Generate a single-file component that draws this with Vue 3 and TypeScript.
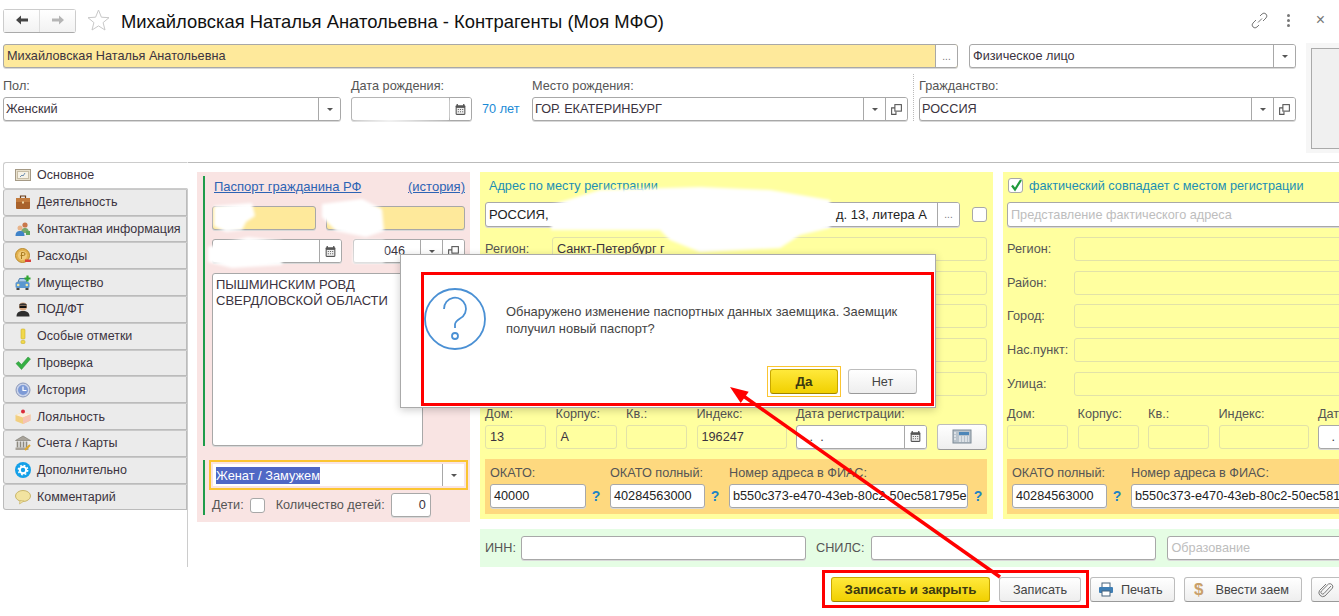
<script setup lang="ts">
interface Tab {
  label: string
  icon: string
}

const tabs: Tab[] = [
  { label: 'Основное', icon: 'card' },
  { label: 'Деятельность', icon: 'case' },
  { label: 'Контактная информация', icon: 'people' },
  { label: 'Расходы', icon: 'coin' },
  { label: 'Имущество', icon: 'car' },
  { label: 'ПОД/ФТ', icon: 'agent' },
  { label: 'Особые отметки', icon: 'excl' },
  { label: 'Проверка', icon: 'check' },
  { label: 'История', icon: 'clock' },
  { label: 'Лояльность', icon: 'cake' },
  { label: 'Счета / Карты', icon: 'bank' },
  { label: 'Дополнительно', icon: 'gear' },
  { label: 'Комментарий', icon: 'bubble' }
]

const regRows = [
  { label: 'Регион:', value: 'Санкт-Петербург г' },
  { label: 'Район:', value: '' },
  { label: 'Город:', value: '' },
  { label: 'Нас.пункт:', value: '' },
  { label: 'Улица:', value: '' }
]

const factRows = regRows.map((r) => ({ label: r.label, value: '' }))
const houseLabels = ['Дом:', 'Корпус:', 'Кв.:', 'Индекс:']
const regHouse = ['13', 'А', '', '196247']
const fiasId = 'b550c373-e470-43eb-80c2-50ec581795e'
</script>

<template>
  <div class="page">
    <svg class="defs" aria-hidden="true">
      <symbol id="i-cal" viewBox="0 0 12 12">
        <rect x="1.5" y="2" width="9" height="9" rx="1" fill="#555" />
        <rect x="2.5" y="4.5" width="7" height="5.5" fill="#eee" />
        <path d="M3 1v2M9 1v2" stroke="#555" stroke-width="1.2" />
        <path d="M3.5 6h5M3.5 8h5" stroke="#666" stroke-dasharray="1 1" />
      </symbol>
      <symbol id="i-open" viewBox="0 0 12 12">
        <rect x="4.5" y="1.5" width="6" height="6" fill="none" stroke="#555" />
        <path d="M4.5 4.5H1.5v6h4V8" fill="none" stroke="#555" />
      </symbol>
      <symbol id="t-card" viewBox="0 0 16 16">
        <rect x="0.5" y="2.5" width="15" height="11" fill="#e8e0cc" stroke="#a59a86" />
        <rect x="2.5" y="4.5" width="11" height="7" fill="#f6f2e6" stroke="#c7bda6" />
        <path d="M5 10l2-2 1 1 2-3" fill="none" stroke="#6f8fb0" />
      </symbol>
      <symbol id="t-case" viewBox="0 0 16 16">
        <path d="M5.5 4V2h5v2" fill="none" stroke="#6b3d18" stroke-width="1.2" />
        <rect x="1" y="4" width="14" height="11" rx="1" fill="#a9622b" />
        <rect x="1" y="4" width="14" height="4" fill="#c27b3d" />
        <rect x="7" y="7.5" width="2" height="2" fill="#f0d9a8" />
      </symbol>
      <symbol id="t-people" viewBox="0 0 16 16">
        <circle cx="10" cy="4" r="2.6" fill="#c9774a" />
        <path d="M6 12c0-4 2-5 4-5s4 1 4 5z" fill="#7aa86b" />
        <circle cx="5" cy="7" r="2.5" fill="#e8b48a" />
        <path d="M0.5 15c0-4 2-5 4.5-5s4.500 1 4.500 5z" fill="#3f83c9" />
        <rect x="11" y="10" width="4" height="4" fill="#5ba55b" />
      </symbol>
      <symbol id="t-coin" viewBox="0 0 16 16">
        <circle cx="7.500" cy="7.500" r="7" fill="#e3b24f" stroke="#b98a2d" />
        <circle cx="7.500" cy="7.500" r="4.500" fill="#f0cc7c" />
        <path d="M6.500 11V4.500h2a1.500 1.500 0 0 1 0 3h-3" fill="none" stroke="#a87a20" />
        <rect x="10" y="11.500" width="6" height="2.500" fill="#d8413a" />
      </symbol>
      <symbol id="t-car" viewBox="0 0 16 16">
        <path d="M3 7l1.500-3.500h6L12 7z" fill="#a9cbe8" stroke="#4a7aa8" />
        <rect x="0.500" y="7" width="14" height="6" rx="1.500" fill="#5a97d0" />
        <circle cx="3.200" cy="10" r="1.300" fill="#f6e7a0" />
        <circle cx="11.800" cy="10" r="1.300" fill="#f6e7a0" />
        <rect x="1.500" y="13" width="3" height="2" fill="#444" />
        <rect x="10.500" y="13" width="3" height="2" fill="#444" />
        <path d="M12.500 0.500v6M9.500 3.500h6" stroke="#2fa52f" stroke-width="2.200" />
      </symbol>
      <symbol id="t-agent" viewBox="0 0 16 16">
        <path d="M1.500 15.500c0-4 2.500-5.500 6.500-5.500s6.500 1.500 6.500 5.500z" fill="#2e2e2e" />
        <circle cx="8" cy="5.500" r="4" fill="#d9a77e" />
        <path d="M4 4.500c0-3 8-3 8 0z" fill="#333" />
        <rect x="4.500" y="5" width="7" height="2" fill="#111" />
      </symbol>
      <symbol id="t-excl" viewBox="0 0 16 16">
        <rect x="6" y="1" width="4" height="10" rx="1" fill="#f1d84b" stroke="#cdb32a" stroke-width="0.600" />
        <rect x="6" y="12.500" width="4" height="3" rx="1" fill="#f1d84b" stroke="#cdb32a" stroke-width="0.600" />
      </symbol>
      <symbol id="t-check" viewBox="0 0 16 16">
        <path d="M1 8.500l2.500-2 3 3L13 2l2.500 2-9 10.500z" fill="#35b044" stroke="#2a8c35" stroke-width="0.500" />
      </symbol>
      <symbol id="t-clock" viewBox="0 0 16 16">
        <circle cx="8" cy="8" r="7" fill="#c9d3ea" stroke="#8a97b8" />
        <circle cx="8" cy="8" r="5" fill="#7d9ad6" />
        <path d="M8 4.500V8.500H11.500" fill="none" stroke="#fff" stroke-width="1.200" />
      </symbol>
      <symbol id="t-cake" viewBox="0 0 16 16">
        <path d="M0.500 6L8 3l7.500 2.500v6L8 15l-7.500-3z" fill="#f2cf7f" />
        <path d="M0.500 6L8 8.500l7.500-3L8 3z" fill="#fbeedd" />
        <path d="M8 8.500V15l7.500-3.500v-6z" fill="#f6c3b4" />
        <circle cx="8" cy="2.500" r="2" fill="#d92b3a" />
      </symbol>
      <symbol id="t-bank" viewBox="0 0 16 16">
        <path d="M0.500 5.500L8 1l7.500 4.500z" fill="#a8a39a" stroke="#77736b" stroke-width="0.600" />
        <path d="M2.500 6.500v6M5.500 6.500v6M8.500 6.500v6M11.500 6.500v6" stroke="#8d897f" stroke-width="1.600" />
        <rect x="0.500" y="12.500" width="13" height="2.500" fill="#a8a39a" />
        <path d="M10 15l5-5" stroke="#e0a92f" stroke-width="2" />
      </symbol>
      <symbol id="t-gear" viewBox="0 0 16 16">
        <circle cx="8" cy="8" r="8" fill="#14a0e8" />
        <circle cx="8" cy="8" r="3.200" fill="none" stroke="#fff" stroke-width="2" />
        <circle cx="8" cy="8" r="4.700" fill="none" stroke="#fff" stroke-width="1.400" stroke-dasharray="1.800 1.900" />
      </symbol>
      <symbol id="t-bubble" viewBox="0 0 16 16">
        <ellipse cx="8" cy="7" rx="7.500" ry="5.500" fill="#f2e3a0" stroke="#c9b66c" />
        <path d="M5 11.500L4.500 15 9 12z" fill="#f2e3a0" stroke="#c9b66c" stroke-width="0.700" />
      </symbol>
    </svg>

    <header class="head">
      <div class="nav">
        <button class="nav-btn">
          <svg width="14" height="12" viewBox="0 0 14 12"><path d="M1 6l5-4.500V4.500h7v3H6v3z" fill="#444" /></svg>
        </button>
        <button class="nav-btn">
          <svg width="14" height="12" viewBox="0 0 14 12"><path d="M13 6L8 1.500V4.500H1v3h7v3z" fill="#b5b5b5" /></svg>
        </button>
      </div>
      <svg class="star" width="23" height="22" viewBox="0 0 23 22">
        <path d="M11.500 1l2.900 7.200 7.600.500-5.900 4.900 1.900 7.400-6.500-4.100-6.500 4.100 1.900-7.400L1 8.700l7.600-.500z" fill="none" stroke="#c8c8c8" />
      </svg>
      <h1 class="title">Михайловская Наталья Анатольевна - Контрагенты (Моя МФО)</h1>
      <div class="head-tools">
        <svg width="17" height="17" viewBox="0 0 17 17">
          <path d="M7 10.500l4-4M9 4l2-2a2.800 2.800 0 0 1 4 4l-3 3M8 13l-2 2a2.800 2.800 0 0 1-4-4l3-3" fill="none" stroke="#777" />
        </svg>
        <span class="dots"><i></i><i></i><i></i></span>
        <span class="close">×</span>
      </div>
    </header>

    <section class="top">
      <div class="top-fields">
        <div class="name-row">
          <div class="field name-field">
            <span class="val">Михайловская Наталья Анатольевна</span>
            <span class="cell dim">...</span>
          </div>
          <div class="field type-field">
            <span class="val">Физическое лицо</span>
            <span class="cell"><i class="caret"></i></span>
          </div>
        </div>
        <div class="person-row">
          <label class="col col-sex">
            <span class="lbl">Пол:</span>
            <div class="field">
              <span class="val">Женский</span>
              <span class="cell"><i class="caret"></i></span>
            </div>
          </label>
          <label class="col col-birth">
            <span class="lbl">Дата рождения:</span>
            <div class="field">
              <span class="val"></span>
              <span class="cell"><svg class="ic"><use href="#i-cal" /></svg></span>
            </div>
          </label>
          <span class="age">70 лет</span>
          <label class="col col-place">
            <span class="lbl">Место рождения:</span>
            <div class="field">
              <span class="val">ГОР. ЕКАТЕРИНБУРГ</span>
              <span class="cell"><i class="caret"></i></span>
              <span class="cell"><svg class="ic"><use href="#i-open" /></svg></span>
            </div>
          </label>
          <label class="col col-citizen">
            <span class="lbl">Гражданство:</span>
            <div class="field">
              <span class="val">РОССИЯ</span>
              <span class="cell"><i class="caret"></i></span>
              <span class="cell"><svg class="ic"><use href="#i-open" /></svg></span>
            </div>
          </label>
        </div>
      </div>
      <div class="photo"><div class="photo-in"></div></div>
    </section>

    <section class="body">
      <nav class="tabs">
        <div v-for="(tab, i) in tabs" :key="tab.label" class="tab" :class="{ active: i === 0 }">
          <svg class="tab-ic"><use :href="'#t-' + tab.icon" /></svg>
          <span>{{ tab.label }}</span>
        </div>
      </nav>

      <div class="content">
        <div class="passport">
          <div class="pass-main">
            <div class="pass-head">
              <a class="link">Паспорт гражданина РФ</a>
              <a class="link hist">(история)</a>
            </div>
            <div class="pass-nums">
              <div class="field req w104"></div>
              <div class="field req grow"></div>
            </div>
            <div class="pass-dates">
              <div class="field w130">
                <span class="val"></span>
                <span class="cell"><svg class="ic"><use href="#i-cal" /></svg></span>
              </div>
              <div class="field w112">
                <span class="val code">046</span>
                <span class="cell"><i class="caret"></i></span>
                <span class="cell"><svg class="ic"><use href="#i-open" /></svg></span>
              </div>
            </div>
            <div class="field issued">ПЫШМИНСКИМ РОВД<br />СВЕРДЛОВСКОЙ ОБЛАСТИ</div>
          </div>
          <div class="pass-extra">
            <div class="marital">
              <span class="val"><mark>Женат / Замужем</mark></span>
              <span class="cell"><i class="caret"></i></span>
            </div>
            <div class="kids">
              <span class="lbl-in">Дети:</span>
              <span class="box"></span>
              <span class="lbl-in kids-count">Количество детей:</span>
              <div class="field kids-num">0</div>
            </div>
          </div>
        </div>

        <div class="right">
          <div class="addresses">
            <div class="addr addr-reg">
              <div class="addr-title">Адрес по месту регистрации</div>
              <div class="addr-line">
                <div class="field addr-input">
                  <span class="val addr-val"><span>РОССИЯ,</span><span>д. 13, литера А</span></span>
                  <span class="cell dim">...</span>
                </div>
                <span class="box"></span>
              </div>
              <div class="addr-rows">
                <div v-for="row in regRows" :key="row.label" class="addr-row">
                  <span class="lbl-in">{{ row.label }}</span>
                  <div class="flat">{{ row.value }}</div>
                </div>
              </div>
              <div class="house">
                <div v-for="(h, i) in houseLabels" :key="h" class="house-col">
                  <span class="lbl-in">{{ h }}</span>
                  <div class="flat">{{ regHouse[i] }}</div>
                </div>
                <div class="house-col">
                  <span class="lbl-in">Дата регистрации:</span>
                  <div class="field">
                    <span class="val">&nbsp; &nbsp;.&nbsp; .</span>
                    <span class="cell"><svg class="ic"><use href="#i-cal" /></svg></span>
                  </div>
                </div>
                <button class="btn phone-btn">
                  <svg width="20" height="15" viewBox="0 0 20 15">
                    <rect x="1" y="1" width="18" height="13" fill="#b9c3cc" stroke="#7d8a96" />
                    <rect x="7" y="3" width="10" height="3" fill="#4d86b8" />
                    <path d="M7 8h10M7 10h10M7 12h10M3 3v9" stroke="#fff" stroke-dasharray="2 1" />
                  </svg>
                </button>
              </div>
              <div class="okato">
                <div class="ok-col ok-a">
                  <span class="lbl-in">ОКАТО:</span>
                  <div class="field">40000</div>
                </div>
                <span class="q">?</span>
                <div class="ok-col ok-b">
                  <span class="lbl-in">ОКАТО полный:</span>
                  <div class="field">40284563000</div>
                </div>
                <span class="q">?</span>
                <div class="ok-col ok-c">
                  <span class="lbl-in">Номер адреса в ФИАС:</span>
                  <div class="field">{{ fiasId }}</div>
                </div>
                <span class="q">?</span>
              </div>
            </div>

            <div class="addr addr-fact">
              <div class="addr-title">
                <span class="box checked">
                  <svg width="14" height="14" viewBox="0 0 14 14"><path d="M3 6.500l3 4L12 1" fill="none" stroke="#1f9a3c" stroke-width="2.200" /></svg>
                </span>
                фактический совпадает с местом регистрации
              </div>
              <div class="addr-line">
                <div class="field addr-input wide">
                  <span class="val ph">Представление фактического адреса</span>
                </div>
              </div>
              <div class="addr-rows">
                <div v-for="row in factRows" :key="row.label" class="addr-row">
                  <span class="lbl-in">{{ row.label }}</span>
                  <div class="flat"></div>
                </div>
              </div>
              <div class="house">
                <div v-for="h in houseLabels" :key="h" class="house-col">
                  <span class="lbl-in">{{ h }}</span>
                  <div class="flat"></div>
                </div>
                <div class="house-col">
                  <span class="lbl-in">Дата регистрации:</span>
                  <div class="field">
                    <span class="val">&nbsp; &nbsp;.&nbsp; .</span>
                  </div>
                </div>
              </div>
              <div class="okato">
                <div class="ok-col ok-b">
                  <span class="lbl-in">ОКАТО полный:</span>
                  <div class="field">40284563000</div>
                </div>
                <span class="q">?</span>
                <div class="ok-col ok-c">
                  <span class="lbl-in">Номер адреса в ФИАС:</span>
                  <div class="field">{{ fiasId }}</div>
                </div>
              </div>
            </div>
          </div>

          <div class="ids">
            <span class="lbl-in">ИНН:</span>
            <div class="field id-field"></div>
            <span class="lbl-in snils">СНИЛС:</span>
            <div class="field id-field"></div>
            <div class="field edu"><span class="val ph">Образование</span></div>
          </div>
        </div>
      </div>
    </section>

    <footer class="actions">
      <button class="btn primary save-close">Записать и закрыть</button>
      <button class="btn save">Записать</button>
      <button class="btn print">
        <svg width="16" height="15" viewBox="0 0 16 15">
          <rect x="4" y="1" width="8" height="5" fill="#fff" stroke="#47637d" />
          <rect x="1" y="5" width="14" height="6" rx="1" fill="#3f7fb5" />
          <rect x="4" y="9" width="8" height="5" fill="#fff" stroke="#47637d" />
        </svg>
        Печать
      </button>
      <button class="btn loan"><span class="dollar">$</span>Ввести заем</button>
      <button class="btn clip">
        <svg width="16" height="16" viewBox="0 0 16 16">
          <path d="M13 4L6 11.500a1.800 1.800 0 0 1-2.600-2.500L10.500 2a3 3 0 0 1 4 4L7 14a4 4 0 0 1-5.500-5.500L8 2" fill="none" stroke="#777" />
        </svg>
      </button>
    </footer>

    <!-- стёртые от руки персональные данные -->
    <svg class="scribbles" width="1339" height="616" aria-hidden="true">
      <path d="M353 99h96v20l-60 3-36-2z" />
      <path d="M214 206l38-3 3 13-9 6-4 8-16 2-12-6z" />
      <path d="M322 204l40-5 20 10 2 22-18 6-30-6-14-14z" />
      <path d="M208 247l40-10 34 4v24l-50 3-24-6z" />
      <path d="M354 240h30v23h-31z" />
      <path d="M551 205l49-15 100-3 70 3 60 10v28l-30 7-20 13-80 4-30-12-10-10H551z" />
    </svg>

    <div class="dialog">
      <svg class="q-icon" width="64" height="64" viewBox="0 0 64 64">
        <circle cx="32" cy="32" r="30" fill="none" stroke="#4a90d4" stroke-width="1.800" />
        <path d="M21 22a11 11 0 1 1 16 9.500c-3 2-5 3.500-5 6V41" fill="none" stroke="#4a90d4" stroke-width="1.800" />
        <circle cx="32" cy="49" r="3" fill="none" stroke="#4a90d4" stroke-width="1.800" />
      </svg>
      <p class="dlg-text">Обнаружено изменение паспортных данных заемщика. Заемщик<br />получил новый паспорт?</p>
      <div class="dlg-btns">
        <span class="focus-ring"><button class="btn primary yes">Да</button></span>
        <button class="btn no">Нет</button>
      </div>
    </div>

    <!-- пометки поверх скриншота -->
    <div class="mark-rect dlg-mark"></div>
    <div class="mark-rect btn-mark"></div>
    <svg class="arrow" width="1339" height="616" aria-hidden="true">
      <path d="M1000 577L742 395" stroke="#f00" stroke-width="3.500" fill="none" />
      <path d="M730 387l10.700 16 8-11.300z" fill="#f00" />
    </svg>
  </div>
</template>

<style scoped>
.page {
  position: relative;
  width: 1339px;
  height: 616px;
  overflow: hidden;
  background: #fff;
  font-family: 'Liberation Sans', Arial, sans-serif;
  font-size: 12.7px;
  color: #3b3340;
}

.defs {
  position: absolute;
  width: 0;
  height: 0;
}

/* шапка */
.head {
  display: flex;
  align-items: center;
  height: 43px;
  padding: 0 0 0 3px;
}

.nav {
  display: flex;
  width: 73px;
  height: 24px;
  margin-top: -1px;
  border: 1px solid #ccc;
  border-bottom-color: #aaa;
  border-radius: 3px;
  box-sizing: border-box;
}

.nav-btn {
  flex: 1;
  padding: 0;
  border: none;
  background: linear-gradient(#fff, #f2f2f2);
}

.nav-btn + .nav-btn {
  border-left: 1px solid #ddd;
}

.star {
  margin: -3px 0 0 11px;
}

.title {
  margin: 0 0 0 11px;
  font-size: 18.4px;
  font-weight: 400;
  color: #111;
  white-space: nowrap;
}

.head-tools {
  display: flex;
  align-items: center;
  margin-left: auto;
  padding-right: 14px;
  margin-top: -3px;
}

.dots {
  display: flex;
  flex-direction: column;
  gap: 2px;
  margin: 0 26px 0 19px;
}

.dots i {
  width: 3px;
  height: 3px;
  border-radius: 50%;
  background: #777;
}

.close {
  font-size: 16px;
  color: #777;
}

/* верхние поля */
.top {
  display: flex;
  height: 119px;
}

.top-fields {
  width: 1296px;
  padding: 1px 0 0 3px;
  box-sizing: border-box;
}

.name-row {
  display: flex;
  gap: 11px;
}

.field.name-field {
  width: 955px;
  padding-left: 3px;
  background: #fee99b;
}

.name-field .cell {
  background: #fff;
}

.field.type-field {
  flex: 1;
  padding-left: 3px;
}

.person-row {
  display: flex;
  align-items: flex-end;
  margin-top: 11px;
}

.col {
  display: flex;
  flex-direction: column;
}

.lbl {
  height: 18px;
  line-height: 15px;
  color: #555;
}

.col-sex {
  width: 338px;
}

.col-birth {
  width: 121px;
  margin-left: 10px;
}

.age {
  width: 50px;
  margin-left: 10px;
  line-height: 24px;
  color: #1b8ad6;
  white-space: nowrap;
}

.col-place {
  width: 376px;
}

.col-citizen {
  flex: 1;
  margin-left: 11px;
  position: relative;
}

.col-citizen::before {
  content: '';
  position: absolute;
  left: -6px;
  top: -5px;
  bottom: 0;
  border-left: 1px dotted #bbb;
}

.photo {
  flex: 1;
  height: 110px;
  margin-left: 10px;
  padding: 5px 0 0 5px;
  box-sizing: border-box;
  background: #f6f6f6;
}

.photo-in {
  height: 99px;
  border: 1px solid #aaa;
  border-right: none;
  background: #f0f0f0;
}

/* общие поля */
.field {
  display: flex;
  align-items: center;
  height: 24px;
  padding-left: 2px;
  border: 1px solid #a8a8a8;
  border-radius: 3px;
  box-shadow: 0 1px 0 #d8d8d8;
  box-sizing: border-box;
  background: #fff;
  white-space: nowrap;
  overflow: hidden;
}

.val {
  flex: 1;
  min-width: 0;
}

.cell {
  display: flex;
  align-items: center;
  justify-content: center;
  flex: none;
  width: 21px;
  height: 100%;
  border-left: 1px solid #a8a8a8;
  background: #fff;
}

.dim {
  color: #777;
  font-size: 10px;
}

.caret {
  width: 0;
  height: 0;
  border: 3px solid transparent;
  border-top: 3.500px solid #555;
  border-bottom: none;
}

.ic {
  width: 13px;
  height: 13px;
}

.box {
  display: inline-block;
  flex: none;
  width: 15px;
  height: 15px;
  border: 1px solid #a8a8a8;
  border-radius: 3px;
  box-sizing: border-box;
  background: #fff;
}

.lbl-in {
  color: #555;
  white-space: nowrap;
}

.ph {
  color: #bdbdbd;
}

.q {
  flex: none;
  width: 10px;
  margin-top: 18px;
  line-height: 24px;
  font-size: 14px;
  font-weight: 700;
  text-align: center;
  color: #2184c4;
}

/* закладки */
.body {
  display: flex;
}

.tabs {
  flex: none;
  width: 184px;
  margin-left: 3px;
  font-size: 12.5px;
}

.tab {
  display: flex;
  align-items: center;
  gap: 6px;
  height: 26.800px;
  padding-left: 11px;
  border: 1px solid #bbb;
  border-top-color: #c8c8c8;
  border-radius: 3px 0 0 3px;
  box-sizing: border-box;
  background: #ebebeb;
  white-space: nowrap;
}

.tab.active {
  position: relative;
  margin-right: -1px;
  border-color: #ccc;
  border-right-color: #fff;
  background: #fff;
}

.tab-ic {
  width: 16px;
  height: 16px;
  flex: none;
}

.content {
  display: flex;
  flex: 1;
  gap: 10px;
  height: 405px;
  padding: 9px 0 0 9px;
  border-top: 1px solid #bbb;
  border-left: 1px solid #ccc;
  box-sizing: border-box;
  min-width: 0;
}

/* паспорт */
.passport {
  flex: none;
  width: 273px;
  height: 350px;
  padding: 4px 5px 0 6px;
  box-sizing: border-box;
  background: #f9e4e3;
}

.pass-main,
.pass-extra {
  border-left: 2px solid #1f9c4a;
  padding-left: 7px;
}

.pass-main {
  height: 270px;
}

.pass-head {
  display: flex;
  justify-content: space-between;
  height: 30px;
  padding: 3px 0 0 2px;
  box-sizing: border-box;
  font-size: 13px;
}

.link {
  color: #2d63b4;
  text-decoration: underline;
}

.pass-nums,
.pass-dates {
  display: flex;
  gap: 10px;
}

.pass-dates {
  margin-top: 9px;
  gap: 11px;
}

.field.req {
  background: #fee99b;
}

.w104 {
  width: 104px;
}

.grow {
  width: 139px;
}

.w130 {
  width: 130px;
}

.w112 {
  width: 112px;
}

.code {
  padding-left: 28px;
}

.field.issued {
  display: block;
  width: 211px;
  height: 173px;
  margin-top: 10px;
  padding: 3px 3px;
  line-height: 16px;
  font-size: 13px;
}

.pass-extra {
  margin-top: 17px;
  height: 55px;
  padding-left: 4px;
}

.marital {
  display: flex;
  align-items: center;
  width: 259px;
  height: 30px;
  margin-top: -3px;
  padding: 2px;
  border: 2px solid #fbc531;
  box-sizing: border-box;
  background: #fff content-box;
  font-size: 12.8px;
}

.marital .val {
  padding-left: 3px;
}

.marital .cell {
  height: 22px;
}

.marital mark {
  padding: 1px 0;
  background: #5068c5;
  color: #fff;
}

.kids {
  display: flex;
  align-items: center;
  height: 24px;
  margin-top: 3px;
  padding-left: 3px;
}

.kids .box {
  margin-left: 6px;
}

.kids-count {
  margin-left: 11px;
}

.field.kids-num {
  justify-content: flex-end;
  width: 40px;
  margin-left: 6px;
  padding-right: 4px;
}

/* адреса */
.right {
  flex: 1;
  min-width: 0;
}

.addresses {
  display: flex;
  gap: 10px;
}

.addr {
  flex: none;
  width: 513px;
  height: 347px;
  padding: 0 6px 0 5px;
  box-sizing: border-box;
  background: #ffff9f;
}

.addr-fact {
  padding-left: 4px;
}

.addr-title {
  display: flex;
  align-items: center;
  gap: 6px;
  height: 30px;
  padding: 0 0 3px 4px;
  box-sizing: border-box;
  color: #1b8fb5;
}

.addr-fact .addr-title {
  padding-left: 1px;
}

.addr-line {
  display: flex;
  align-items: center;
  gap: 12px;
  height: 25px;
}

.field.addr-input {
  width: 475px;
  height: 25px;
  padding-left: 3px;
}

.field.addr-input.wide {
  width: 520px;
  flex: none;
}

.addr-val {
  display: flex;
  justify-content: space-between;
  padding-right: 10px;
  color: #222;
  font-size: 13px;
}

.addr-rows {
  display: flex;
  flex-direction: column;
  gap: 9.700px;
  margin-top: 10px;
}

.addr-row {
  display: flex;
  align-items: center;
}

.addr-row .lbl-in {
  flex: none;
  width: 67px;
}

.flat {
  flex: 1;
  height: 24px;
  padding-left: 4px;
  line-height: 22px;
  border: 1px solid #e2e2a8;
  border-radius: 3px;
  box-sizing: border-box;
  background: #ffff9f;
}

.house {
  display: grid;
  grid-template-columns: 61px 61px 61px 90px 131px 50px;
  column-gap: 9.500px;
  align-items: end;
  margin-top: 11px;
}

.house-col {
  display: flex;
  flex-direction: column;
  gap: 4px;
}

.house-col .lbl-in {
  line-height: 14px;
}

.flat,
.house-col .field {
  flex: none;
}

.addr-row .flat {
  flex: 1;
}

.okato {
  display: flex;
  width: 502px;
  height: 55px;
  margin-top: 10px;
  padding: 7px 5px 0 5px;
  box-sizing: border-box;
  background: #fed97f;
}

.ok-col {
  display: flex;
  flex-direction: column;
  gap: 4px;
  flex: none;
}

.ok-col .lbl-in {
  line-height: 14px;
}

.ok-col .field {
  padding-left: 3px;
  color: #222;
}

.ok-a {
  width: 96px;
  margin-right: 5px;
}

.ok-b {
  width: 95px;
  margin-right: 5px;
}

.ok-a + .q {
  margin-right: 9px;
}

.ok-b + .q {
  margin-right: 9px;
}

.ok-c {
  width: 239px;
  margin-right: 5px;
}

/* ИНН и СНИЛС */
.ids {
  display: flex;
  align-items: center;
  width: 880px;
  height: 38px;
  margin-top: 10px;
  padding-left: 5px;
  box-sizing: border-box;
  background: #e5fde4;
}

.field.id-field {
  flex: none;
  width: 285px;
  margin-left: 5px;
}

.snils {
  margin-left: 10px;
}

.snils + .field.id-field {
  margin-left: 7px;
}

.field.edu {
  flex: none;
  width: 200px;
  margin-left: 11px;
  padding-left: 3px;
}

/* кнопки */
.btn {
  display: inline-flex;
  align-items: center;
  justify-content: center;
  height: 25px;
  padding: 0;
  border: 1px solid #bdbdbd;
  border-bottom-color: #999;
  border-radius: 3px;
  box-sizing: border-box;
  background: linear-gradient(#fff, #eee);
  font: inherit;
  color: #444;
  white-space: nowrap;
}

.primary {
  border-color: #c9a800;
  border-bottom-color: #9d8300;
  background: linear-gradient(#ffe93b, #f1d000);
  color: #3d3a10;
  font-size: 13.3px;
  font-weight: 700;
}

.phone-btn {
  height: 26px;
  margin-bottom: -1px;
}

.actions {
  display: flex;
  gap: 9px;
  margin-top: 10px;
  padding-left: 831px;
}

.save-close {
  flex: none;
  width: 159px;
}

.save {
  flex: none;
  width: 82px;
}

.print {
  flex: none;
  justify-content: flex-start;
  gap: 7px;
  width: 85px;
  padding-left: 7px;
}

.loan {
  flex: none;
  justify-content: flex-start;
  gap: 12px;
  width: 118px;
  padding-left: 9px;
}

.dollar {
  font-size: 17px;
  font-weight: 700;
  color: #c9a06a;
}

.clip {
  flex: none;
  width: 60px;
  justify-content: flex-start;
  padding-left: 6px;
}

/* закрашенные данные */
.scribbles {
  position: absolute;
  left: 0;
  top: 0;
  fill: #fff;
  filter: blur(1.500px);
  pointer-events: none;
}

/* диалог */
.dialog {
  position: absolute;
  left: 400px;
  top: 254px;
  width: 536px;
  height: 154px;
  border: 1px solid #aaa;
  box-shadow: 0 2px 8px rgba(0, 0, 0, 0.2);
  box-sizing: border-box;
  background: #fff;
}

.q-icon {
  position: absolute;
  left: 22px;
  top: 32px;
}

.dlg-text {
  position: absolute;
  left: 105px;
  top: 49px;
  margin: 0;
  font-size: 12.9px;
  line-height: 16.500px;
  color: #444;
  white-space: nowrap;
}

.dlg-btns {
  position: absolute;
  left: 366px;
  top: 111px;
  display: flex;
  align-items: center;
  gap: 7px;
}

.focus-ring {
  display: flex;
  padding: 2px;
  border: 1px solid #fbc531;
}

.yes {
  width: 68px;
  font-size: 13.5px;
}

.no {
  width: 69px;
}

.mark-rect {
  position: absolute;
  border: 3px solid #f00;
  box-sizing: border-box;
}

.dlg-mark {
  left: 421px;
  top: 272px;
  width: 513px;
  height: 134px;
}

.btn-mark {
  left: 822px;
  top: 570px;
  width: 267px;
  height: 38px;
}

.arrow {
  position: absolute;
  left: 0;
  top: 0;
  pointer-events: none;
}
</style>
